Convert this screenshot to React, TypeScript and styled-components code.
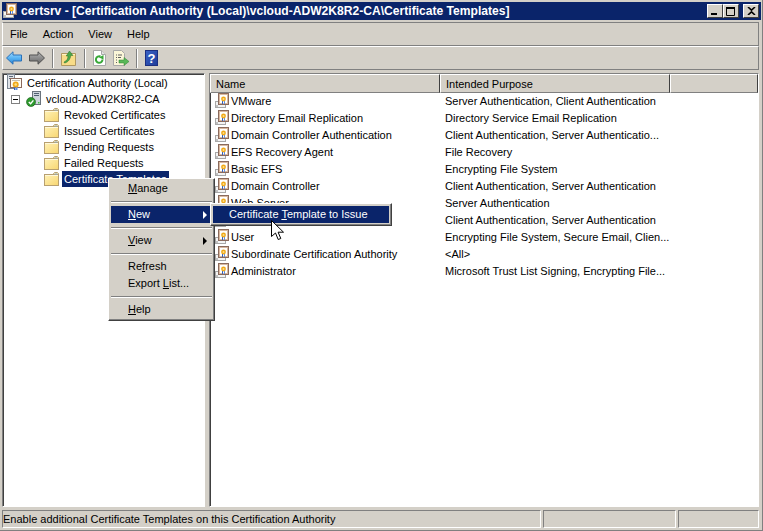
import styled, { createGlobalStyle } from "styled-components";

const FACE = "#d4d0c8";
const NAVY = "#0a246a";
const SHADOW = "#808080";

const GlobalStyle = createGlobalStyle`
    html, body {
        margin: 0;
        padding: 0;
        height: 100%;
        overflow: hidden;
        background: ${FACE};
    }
    * { box-sizing: border-box; }
`;

const Frame = styled.div`
    position: relative;
    width: 763px;
    height: 531px;
    padding: 2px 1px 3px 2px;
    display: flex;
    flex-direction: column;
    background: ${FACE};
    font-family: "Liberation Sans", sans-serif;
    font-size: 11px;
    color: #000;
    border-right: 1px solid #808080;
    border-bottom: 1px solid #808080;
`;

const TitleBar = styled.div`
    height: 18px;
    flex: none;
    background: ${NAVY};
    color: #fff;
    display: flex;
    align-items: center;
    padding: 0 2px 0 1px;
    gap: 2px;
`;

const TitleText = styled.div`
    flex: 1;
    font-weight: bold;
    font-size: 12.1px;
    white-space: nowrap;
`;

const CaptionButton = styled.button`
    width: 16px;
    height: 14px;
    padding: 0;
    margin: 0;
    background: ${FACE};
    border: 1px solid;
    border-color: #fff #404040 #404040 #fff;
    display: flex;
    align-items: center;
    justify-content: center;
`;

const CaptionGroup = styled.div`
    display: flex;
    &:last-child { margin-left: 2px; }
`;

const WindowBody = styled.div`
    flex: 1;
    min-height: 0;
    display: flex;
    flex-direction: column;
    padding-right: 2px;
`;

const MenuBar = styled.div`
    height: 24px;
    margin-top: 2px;
    flex: none;
    display: flex;
    align-items: center;
    padding-left: 7px;
    gap: 15px;
    border: 1px solid;
    border-color: ${SHADOW} ${SHADOW} ${SHADOW} #fff;
`;

const ToolBar = styled.div`
    height: 24px;
    flex: none;
    display: flex;
    align-items: center;
    padding-left: 3px;
    gap: 7px;
    border: 1px solid;
    border-color: #fff ${SHADOW} ${SHADOW} #fff;
`;

const ToolSep = styled.div`
    width: 2px;
    height: 19px;
    border-left: 1px solid ${SHADOW};
    border-right: 1px solid #fff;
`;

const Panes = styled.div`
    flex: 1;
    min-height: 0;
    margin-top: 3px;
    display: grid;
    grid-template-columns: 203px 1fr;
    column-gap: 4px;
`;

const Sunken = styled.div`
    background: #fff;
    border: 1px solid;
    border-color: ${SHADOW} #fff #fff ${SHADOW};
    box-shadow: inset 1px 1px 0 #404040;
    overflow: hidden;
`;

const TreePane = styled(Sunken)`
    padding: 1px 0 0 2px;
`;

const TreeRow = styled.div<{ $indent: number }>`
    height: 16px;
    display: flex;
    align-items: center;
    padding-left: ${(p) => p.$indent}px;
    white-space: nowrap;
`;

const Expander = styled.span`
    width: 9px;
    height: 9px;
    border: 1px solid ${SHADOW};
    margin-right: 6px;
    display: flex;
    align-items: center;
    justify-content: center;
    &::before {
        content: "";
        width: 5px;
        height: 1px;
        background: #000;
    }
`;

const TreeLabel = styled.span<{ $selected?: boolean }>`
    padding: 0 2px;
    margin-left: 2px;
    height: 16px;
    line-height: 16px;
    background: ${(p) => (p.$selected ? NAVY : "transparent")};
    color: ${(p) => (p.$selected ? "#fff" : "#000")};
`;

const ListPane = styled(Sunken)`
    display: flex;
    flex-direction: column;
`;

const HeaderRow = styled.div`
    height: 18px;
    flex: none;
    display: grid;
    grid-template-columns: 230px 230px 1fr;
`;

const HeaderCell = styled.div`
    background: ${FACE};
    border: 1px solid;
    border-color: #fff #404040 ${SHADOW} #fff;
    padding: 1px 0 0 5px;
    line-height: 16px;
`;

const ListRow = styled.div`
    height: 17px;
    display: grid;
    grid-template-columns: 230px 1fr;
    align-items: center;
`;

const NameCell = styled.div`
    display: flex;
    align-items: center;
    padding-left: 5px;
    white-space: nowrap;
`;

const PurposeCell = styled.div`
    padding-left: 5px;
    white-space: nowrap;
`;

const StatusBar = styled.div`
    height: 17px;
    flex: none;
    margin-top: 3px;
    display: grid;
    grid-template-columns: 539px 133px 1fr;
    column-gap: 2px;
`;

const StatusCell = styled.div`
    border: 1px solid;
    border-color: ${SHADOW} #fff #fff ${SHADOW};
    line-height: 16px;
    white-space: nowrap;
`;

const Popup = styled.div`
    position: absolute;
    background: ${FACE};
    border: 1px solid;
    border-color: #fff #404040 #404040 #fff;
    box-shadow: inset -1px -1px 0 ${SHADOW};
    z-index: 2;
`;

const ContextMenu = styled(Popup)`
    left: 108px;
    top: 178px;
    width: 107px;
    height: 143px;
    padding: 1px 2px;
`;

const SubMenu = styled(Popup)`
    left: 210px;
    top: 203px;
    width: 182px;
    height: 23px;
    padding: 2px;
    z-index: 3;
`;

const PopupItem = styled.div<{ $active?: boolean }>`
    position: relative;
    height: 17px;
    line-height: 17px;
    padding-left: 17px;
    white-space: nowrap;
    background: ${(p) => (p.$active ? NAVY : "transparent")};
    color: ${(p) => (p.$active ? "#fff" : "#000")};
`;

const SubMenuItem = styled(PopupItem)`
    padding-left: 16px;
`;

const Arrow = styled.span<{ $active?: boolean }>`
    position: absolute;
    right: 5px;
    top: 50%;
    margin-top: -4px;
    border-left: 4px solid ${(p) => (p.$active ? "#fff" : "#000")};
    border-top: 4px solid transparent;
    border-bottom: 4px solid transparent;
`;

const PopupSep = styled.div`
    height: 2px;
    margin: 4px 0 3px;
    border-top: 1px solid ${SHADOW};
    border-bottom: 1px solid #fff;
`;

const Cursor = styled.svg`
    position: absolute;
    left: 271px;
    top: 220px;
    z-index: 4;
`;

const Icon = styled.svg`
    flex: none;
    display: block;
`;

function CertIcon() {
    return (
        <Icon width="16" height="16" viewBox="0 0 16 16">
            <rect x="0.5" y="8.5" width="10" height="6" fill="#f4f4f4" stroke="#a8a8a8" />
            <rect x="3" y="0" width="11" height="12" fill="#8a6a5c" />
            <rect x="4" y="1" width="9" height="10" fill="#d8b8a0" />
            <rect x="5" y="2" width="7" height="8" fill="#fff" />
            <rect x="7" y="8" width="1" height="3" fill="#3060c0" />
            <rect x="9" y="8" width="1" height="3" fill="#6090e0" />
            <circle cx="8.5" cy="6" r="2.4" fill="#f0a818" />
            <circle cx="8.5" cy="6" r="1" fill="#fde08a" />
            <rect x="1" y="12" width="2" height="2" fill="#c0c0c0" />
        </Icon>
    );
}

function RootIcon() {
    return (
        <Icon width="18" height="18" viewBox="0 0 18 18">
            <rect x="2.5" y="0.5" width="7" height="14" fill="#dfe3e8" stroke="#7c8794" />
            <rect x="4" y="2" width="4" height="1" fill="#5c6878" />
            <rect x="4" y="4" width="4" height="1" fill="#5c6878" />
            <rect x="5" y="4" width="12" height="10" fill="#8a6a5c" />
            <rect x="6" y="5" width="10" height="8" fill="#fffdf4" />
            <rect x="7" y="6" width="8" height="1" fill="#c8c0b0" />
            <rect x="9" y="12" width="1.5" height="4" fill="#3060c0" />
            <rect x="11" y="12" width="1.5" height="4" fill="#6090e0" />
            <circle cx="10.7" cy="10.5" r="3" fill="#f0a818" />
            <circle cx="10.7" cy="10.5" r="1.3" fill="#fde08a" />
        </Icon>
    );
}

function ServerIcon() {
    return (
        <Icon width="16" height="16" viewBox="0 0 16 16">
            <rect x="6.5" y="0.5" width="8" height="13" fill="#cdd5dc" stroke="#6a737c" />
            <rect x="8" y="2" width="5" height="1" fill="#506070" />
            <rect x="8" y="4" width="5" height="1" fill="#506070" />
            <rect x="12" y="11" width="1.5" height="1.5" fill="#40c040" />
            <circle cx="5" cy="11" r="4.5" fill="#2e9a2e" stroke="#145a14" strokeWidth="0.6" />
            <path d="M2.8 11l1.8 1.8 2.8-3.4" fill="none" stroke="#fff" strokeWidth="1.4" />
        </Icon>
    );
}

function FolderIcon() {
    return (
        <Icon width="16" height="15" viewBox="0 0 16 15">
            <defs>
                <linearGradient id="folderFill" x1="0" y1="0" x2="1" y2="1">
                    <stop offset="0" stopColor="#fff2b8" />
                    <stop offset="1" stopColor="#f8d670" />
                </linearGradient>
            </defs>
            <path d="M9.5 3V1.5l1-1h3l1 1V3z" fill="#fbe9a8" stroke="#b8a070" />
            <rect x="0.5" y="2.5" width="14" height="11" fill="url(#folderFill)" stroke="#b8a070" />
            <rect x="10.5" y="1.5" width="3" height="1" fill="#90b0d0" />
            <rect x="1" y="3" width="13" height="1" fill="#fff8d8" />
        </Icon>
    );
}

function BackIcon() {
    return (
        <Icon width="16" height="14" viewBox="0 0 16 14">
            <defs>
                <linearGradient id="backFill" x1="0" y1="0" x2="0" y2="1">
                    <stop offset="0" stopColor="#a8dcff" />
                    <stop offset="0.5" stopColor="#58b4f4" />
                    <stop offset="1" stopColor="#2a80d0" />
                </linearGradient>
            </defs>
            <path d="M.5 7L7 .8v3.2h8.5v6H7v3.2z" fill="url(#backFill)" stroke="#2a70b8" strokeLinejoin="round" />
        </Icon>
    );
}

function ForwardIcon() {
    return (
        <Icon width="16" height="14" viewBox="0 0 16 14">
            <defs>
                <linearGradient id="forwardFill" x1="0" y1="0" x2="0" y2="1">
                    <stop offset="0" stopColor="#b8b8b8" />
                    <stop offset="0.5" stopColor="#8c8c8c" />
                    <stop offset="1" stopColor="#686868" />
                </linearGradient>
            </defs>
            <path d="M15.5 7L9 .8v3.2H.5v6H9v3.2z" fill="url(#forwardFill)" stroke="#505050" strokeLinejoin="round" />
        </Icon>
    );
}

function UpFolderIcon() {
    return (
        <Icon width="16" height="16" viewBox="0 0 16 16">
            <path d="M.5 3.5h14v12H.5z" fill="#f8dc88" stroke="#b09860" />
            <rect x="1" y="4" width="13" height="1" fill="#fff4c8" />
            <path d="M3 12c2.500-1 4-3 4-6H5.200L8.500 1 12 5.500H9.700C9.500 9 7 12.500 3.500 13z" fill="#4aa84a" stroke="#2c702c" strokeWidth="0.5" />
        </Icon>
    );
}

function RefreshIcon() {
    return (
        <Icon width="13" height="16" viewBox="0 0 13 16">
            <path d="M.5 .5h8l4 4v11H.5z" fill="#fff" stroke="#a8a8a8" />
            <path d="M8.500 .5v4h4" fill="#e4e4e4" stroke="#a8a8a8" />
            <path d="M9.500 9.500a3.300 3.300 0 1 1-2-3" fill="none" stroke="#38a838" strokeWidth="2" />
            <path d="M6 7.500l4.500-2.500v4.500z" fill="#38a838" />
        </Icon>
    );
}

function ExportIcon() {
    return (
        <Icon width="16" height="16" viewBox="0 0 16 16">
            <path d="M.5 .5h8l3 3v12H.5z" fill="#fbf6d8" stroke="#a8a8a8" />
            <path d="M3 5h1M5 5h4M3 7.500h1M5 7.500h3M3 10h1M3 12.500h1" stroke="#606060" />
            <path d="M6 10h5V7.500l5 4-5 4V13H6z" fill="#58b858" stroke="#308030" strokeWidth="0.5" />
        </Icon>
    );
}

function HelpIcon() {
    return (
        <Icon width="13" height="16" viewBox="0 0 13 16">
            <defs>
                <linearGradient id="helpFill" x1="0" y1="0" x2="1" y2="1">
                    <stop offset="0" stopColor="#3c64c8" />
                    <stop offset="1" stopColor="#1c3a98" />
                </linearGradient>
            </defs>
            <rect width="13" height="16" fill="url(#helpFill)" />
            <rect x="0.5" y="0.5" width="12" height="15" fill="none" stroke="#1c2f80" />
            <text x="6.5" y="13" textAnchor="middle" fontFamily="Liberation Sans" fontWeight="bold" fontSize="13" fill="#fff">?</text>
        </Icon>
    );
}

const TEMPLATES: [string, string][] = [
    ["VMware", "Server Authentication, Client Authentication"],
    ["Directory Email Replication", "Directory Service Email Replication"],
    ["Domain Controller Authentication", "Client Authentication, Server Authenticatio..."],
    ["EFS Recovery Agent", "File Recovery"],
    ["Basic EFS", "Encrypting File System"],
    ["Domain Controller", "Client Authentication, Server Authentication"],
    ["Web Server", "Server Authentication"],
    ["Computer", "Client Authentication, Server Authentication"],
    ["User", "Encrypting File System, Secure Email, Clien..."],
    ["Subordinate Certification Authority", "<All>"],
    ["Administrator", "Microsoft Trust List Signing, Encrypting File..."],
];

const FOLDERS = ["Revoked Certificates", "Issued Certificates", "Pending Requests", "Failed Requests"];

export default function App() {
    return (
        <Frame>
            <GlobalStyle />
            <TitleBar>
                <CertIcon />
                <TitleText>certsrv - [Certification Authority (Local)\vcloud-ADW2K8R2-CA\Certificate Templates]</TitleText>
                <CaptionGroup>
                    <CaptionButton>
                        <svg width="8" height="8"><rect x="0" y="6" width="6" height="2" /></svg>
                    </CaptionButton>
                    <CaptionButton>
                        <svg width="10" height="9"><path d="M.5 1.5h8v7h-8z" fill="none" stroke="#000" /><rect x="0" y="0" width="9" height="2" /></svg>
                    </CaptionButton>
                </CaptionGroup>
                <CaptionGroup>
                    <CaptionButton>
                        <svg width="9" height="8"><path d="M1 0l3.500 3.200L8 0M1 8l3.500-3.200L8 8" fill="none" stroke="#000" strokeWidth="1.6" /></svg>
                    </CaptionButton>
                </CaptionGroup>
            </TitleBar>
            <WindowBody>
                <MenuBar>
                    <span>File</span>
                    <span>Action</span>
                    <span>View</span>
                    <span>Help</span>
                </MenuBar>
                <ToolBar>
                    <BackIcon />
                    <ForwardIcon />
                    <ToolSep />
                    <UpFolderIcon />
                    <ToolSep />
                    <RefreshIcon />
                    <ExportIcon />
                    <ToolSep />
                    <HelpIcon />
                </ToolBar>
                <Panes>
                    <TreePane>
                        <TreeRow $indent={0}>
                            <RootIcon />
                            <TreeLabel>Certification Authority (Local)</TreeLabel>
                        </TreeRow>
                        <TreeRow $indent={6}>
                            <Expander />
                            <ServerIcon />
                            <TreeLabel>vcloud-ADW2K8R2-CA</TreeLabel>
                        </TreeRow>
                        {FOLDERS.map((name) => (
                            <TreeRow key={name} $indent={39}>
                                <FolderIcon />
                                <TreeLabel>{name}</TreeLabel>
                            </TreeRow>
                        ))}
                        <TreeRow $indent={39}>
                            <FolderIcon />
                            <TreeLabel $selected>Certificate Templates</TreeLabel>
                        </TreeRow>
                    </TreePane>
                    <ListPane>
                        <HeaderRow>
                            <HeaderCell>Name</HeaderCell>
                            <HeaderCell>Intended Purpose</HeaderCell>
                            <HeaderCell />
                        </HeaderRow>
                        <div>
                            {TEMPLATES.map(([name, purpose]) => (
                                <ListRow key={name}>
                                    <NameCell>
                                        <CertIcon />
                                        {name}
                                    </NameCell>
                                    <PurposeCell>{purpose}</PurposeCell>
                                </ListRow>
                            ))}
                        </div>
                    </ListPane>
                </Panes>
                <StatusBar>
                    <StatusCell>Enable additional Certificate Templates on this Certification Authority</StatusCell>
                    <StatusCell />
                    <StatusCell />
                </StatusBar>
            </WindowBody>
            <ContextMenu>
                <PopupItem>
                    <u>M</u>anage
                </PopupItem>
                <PopupSep />
                <PopupItem $active>
                    <u>N</u>ew
                    <Arrow $active />
                </PopupItem>
                <PopupSep />
                <PopupItem>
                    <u>V</u>iew
                    <Arrow />
                </PopupItem>
                <PopupSep />
                <PopupItem>
                    Re<u>f</u>resh
                </PopupItem>
                <PopupItem>
                    Export <u>L</u>ist...
                </PopupItem>
                <PopupSep />
                <PopupItem>
                    <u>H</u>elp
                </PopupItem>
            </ContextMenu>
            <SubMenu>
                <SubMenuItem $active>
                    Certificate <u>T</u>emplate to Issue
                </SubMenuItem>
            </SubMenu>
            <Cursor width="14" height="21" viewBox="0 0 14 21">
                <path d="M.5.5v16l4-3.500 2.700 6.500 2.600-1-2.700-6.300h5.400z" fill="#fff" stroke="#000" />
            </Cursor>
        </Frame>
    );
}
